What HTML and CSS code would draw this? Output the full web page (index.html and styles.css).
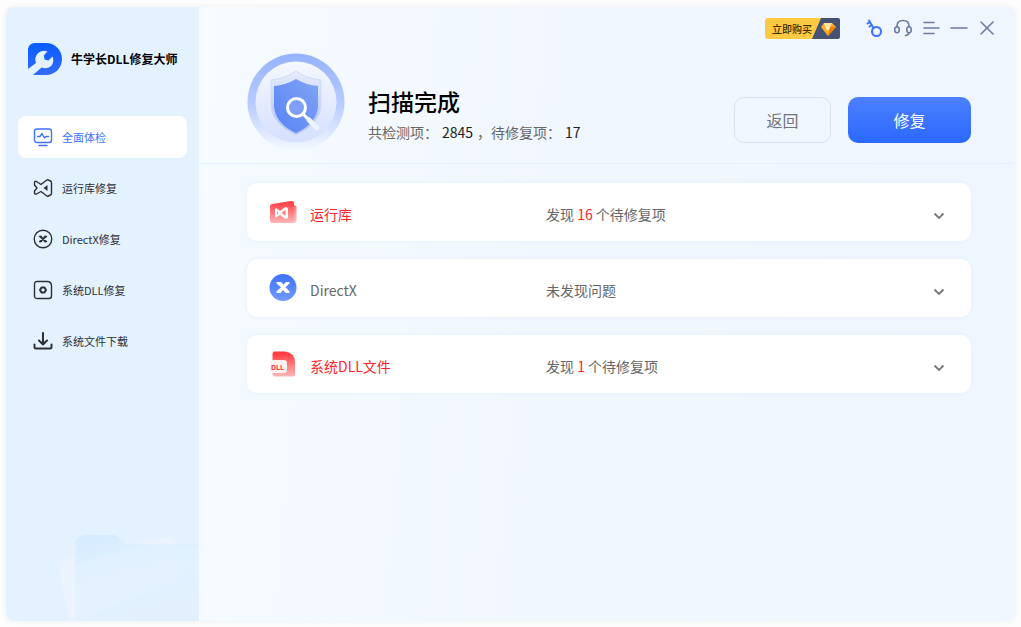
FILE: index.html
```html
<!DOCTYPE html>
<html lang="zh-CN">
<head>
<meta charset="utf-8">
<title>牛学长DLL修复大师</title>
<link rel="stylesheet" href="styles.css">
</head>
<body>
<div class="window">
  <aside class="sidebar">
    <div class="brand">
      <svg class="brand-logo" viewBox="0 0 34 32" aria-hidden="true">
        <defs><linearGradient id="logoFill" x1="0" y1="0" x2="0" y2="1"><stop offset="0" stop-color="#0a5cff"/><stop offset="1" stop-color="#316cff"/></linearGradient></defs>
        <path fill="url(#logoFill)" d="M7 0H18C27 0 34 7 34 16S27 32 18 32H5L13.500 24.500C17 26 21 25.400 23.500 22.500C25.500 20 25.800 16.500 24.500 13.500L20.500 17.500L16.500 16.500L15.800 12.500L19.500 8.300C16 7 12 8 9.500 10.800C7 13.600 6.800 17 8 20L0 26V7C0 3 3 0 7 0Z"/>
      </svg>
      <span>牛学长DLL修复大师</span>
    </div>
    <nav class="nav">
      <a class="nav-item active" href="#" aria-current="page">
        <svg viewBox="0 0 20 20"><rect x="1.500" y="2" width="17" height="13.500" rx="2.500"/><path d="M4.500 9.500H7L9 6.500L11.500 11L13 9.500H15.500M6 18.500H14"/></svg>
        <span>全面体检</span>
      </a>
      <a class="nav-item" href="#">
        <svg viewBox="0 0 20 20"><path d="M1.500 4.500Q1.500 3 3.500 3.500L8 6.500L13.500 2.300Q14.300 1.500 15.300 2L17.500 3Q18.500 3.500 18.500 4.500V15.500Q18.500 16.500 17.500 17L15.300 18Q14.300 18.500 13.500 17.700L8 13.500L3.500 16Q1.500 16.500 1.500 15V13L4 10L1.500 7Z"/><path class="solid" d="M14.500 7V13L10.500 10Z"/></svg>
        <span>运行库修复</span>
      </a>
      <a class="nav-item" href="#">
        <svg viewBox="0 0 20 20"><circle cx="10" cy="10" r="8.800"/><path class="heavy" d="M7.500 7.800L12.500 12.200M12.500 7.800L7.500 12.200"/><path d="M6.500 7.500H8.500M11.500 7.500H13.500M6.500 12.500H8.500M11.500 12.500H13.500"/></svg>
        <span>DirectX修复</span>
      </a>
      <a class="nav-item" href="#">
        <svg viewBox="0 0 20 20"><path d="M4 1.500H14Q18.500 1.500 18.500 6V16Q18.500 18.500 16 18.500H4Q1.500 18.500 1.500 16V4Q1.500 1.500 4 1.500Z"/><path class="heavy" d="M8.500 7.500H11.500L13 10L11.500 12.500H8.500L7 10Z"/></svg>
        <span>系统DLL修复</span>
      </a>
      <a class="nav-item" href="#">
        <svg viewBox="0 0 20 20"><path class="heavy" d="M10 2V13M6 9.500L10 13.500L14 9.500M1.500 13.500V16Q1.500 17.500 3 17.500H17Q18.500 17.500 18.500 16V13.500"/></svg>
        <span>系统文件下载</span>
      </a>
    </nav>
    <svg class="folder" viewBox="0 0 141 87" aria-hidden="true">
      <defs><linearGradient id="folderFill" x1="0" y1="0" x2=".35" y2="1"><stop offset="0" stop-color="#d4ebff"/><stop offset=".55" stop-color="#e2f2ff"/><stop offset="1" stop-color="#e2f0fe"/></linearGradient></defs>
      <path fill="#ebf3ff" d="M1 33Q0 28 5 26L108 3Q115 2 118 8L141 87H11Z"/>
      <path fill="url(#folderFill)" d="M17 87V12Q17 1 30 1H57L67 10H141V87Z"/>
      <path fill="#ebf3ff" opacity=".8" d="M83 10L108 4Q115 3 118 10Z"/>
      <path fill="#eef6ff" opacity=".2" d="M17 31L83 10H118L124 44L20 87H17Z"/>
    </svg>
  </aside>

  <main class="main">
    <header class="header">
      <div class="toolbar">
        <button class="buy" type="button"><span>立即购买</span>
          <svg viewBox="0 0 28 21" aria-hidden="true"><path fill="#465273" d="M9 0H26Q28 0 28 2V19Q28 21 26 21H0Z"/><path fill="#ffad24" d="M12 5H20L24 9L16 18L9 9Z"/><path fill="#ffe3a0" d="M12 5H20L18 9H13Z"/><path fill="#ed8100" d="M18 9H24L16 18Z"/><path fill="#fff1cc" d="M13 9H18L16 13Z"/></svg>
        </button>
        <button class="tool key" type="button" aria-label="注册"><svg viewBox="0 0 20 20"><circle cx="11.500" cy="13.500" r="4.500"/><path d="M8.500 10L4 2.500M2.500 5.500L5 4M4.500 8.500L7 7"/></svg></button>
        <button class="tool" type="button" aria-label="客服"><svg viewBox="0 0 20 20"><path d="M4 9V8Q4 2.500 10 2.500T16 8V9M16 15Q15.500 17 12.500 17.500"/><ellipse cx="4" cy="11.700" rx="2.300" ry="3"/><ellipse cx="16" cy="11.700" rx="2.300" ry="3"/></svg></button>
        <button class="tool" type="button" aria-label="菜单"><svg viewBox="0 0 20 20"><path d="M3 4.500H13M3 10H18M3 15.500H13"/></svg></button>
        <button class="tool" type="button" aria-label="最小化"><svg viewBox="0 0 20 20"><path d="M2 10H18"/></svg></button>
        <button class="tool" type="button" aria-label="关闭"><svg viewBox="0 0 20 20"><path d="M4 4L16 16M16 4L4 16"/></svg></button>
      </div>
      <div class="summary">
        <svg class="medal" viewBox="0 0 98 98" aria-hidden="true">
          <defs>
            <linearGradient id="ring" x1="0" y1="0" x2="0" y2="1"><stop offset="0" stop-color="#95b3ff"/><stop offset=".5" stop-color="#b5caff"/><stop offset="1" stop-color="#f4f9ff"/></linearGradient>
            <linearGradient id="disc" x1="0" y1="0" x2="0" y2="1"><stop offset="0" stop-color="#f5f8ff"/><stop offset="1" stop-color="#d5e0ff"/></linearGradient>
            <linearGradient id="shield" x1="1" y1="0" x2="0" y2="1"><stop offset="0" stop-color="#82a4f4"/><stop offset="1" stop-color="#5683f6"/></linearGradient>
            <linearGradient id="back" x1="0" y1="0" x2="0" y2="1"><stop offset="0" stop-color="#e6ecfb"/><stop offset="1" stop-color="#a7bff8"/></linearGradient>
          </defs>
          <circle cx="49" cy="49" r="48.500" fill="url(#ring)"/>
          <circle cx="49" cy="49" r="40.500" fill="url(#disc)"/>
          <path fill="url(#back)" stroke="#d1dbf5" d="M49 18Q60 26 74 27V53Q73 71 49 82Q25 71 24 53V27Q38 26 49 18Z"/>
          <path fill="url(#shield)" d="M49 26Q59 32 71 33V53Q70 70 49 80Q28 70 27 53V33Q39 32 49 26Z"/>
          <circle cx="49.500" cy="54.500" r="9" fill="#7e9ff5" stroke="#fff" stroke-width="3"/>
          <path stroke="#fff" stroke-width="3" stroke-linecap="round" d="M56 61L62 67"/>
          <path stroke="#edf3ff" stroke-width="5" stroke-linecap="round" d="M62 67L70 75"/>
        </svg>
        <div class="result">
          <h1>扫描完成</h1>
          <p><span>共检测项：</span><b>2845</b><span>，待修复项：</span><b>17</b></p>
        </div>
        <div class="actions">
          <button class="btn back" type="button">返回</button>
          <button class="btn repair" type="button">修复</button>
        </div>
      </div>
    </header>

    <section class="cards">
      <article class="card problem">
        <svg class="card-icon" viewBox="0 0 28 28" aria-hidden="true">
          <defs><linearGradient id="redA" x1="0" y1="0" x2="0" y2="1"><stop offset="0" stop-color="#ff383d"/><stop offset="1" stop-color="#ffb8b8"/></linearGradient></defs>
          <path fill="url(#redA)" opacity=".75" d="M20 6L25 7Q27.500 7.500 27.500 9V23Q27.500 25 25 25H20Z"/>
          <path fill="url(#redA)" d="M3 6L22 3Q25 2.500 25 5V22Q25 25 22 25H3Q1 25 1 23V8Q1 6.500 3 6Z"/>
          <path fill="#fff" fill-rule="evenodd" d="M7 10L11 13L16.500 9L19 10V20L16.500 21L11 17L7 19.500L6 18.500V11ZM8 13V17L9.500 15ZM16.500 12L12.500 15L16.500 18Z"/>
        </svg>
        <h2>运行库</h2><p>发现 <b>16</b> 个待修复项</p>
        <button class="expand" type="button" aria-label="展开运行库"><svg viewBox="0 0 12 8"><path d="M1.500 1.500L6 6L10.500 1.500"/></svg></button>
      </article>
      <article class="card">
        <svg class="card-icon" viewBox="0 0 28 28" aria-hidden="true">
          <defs><linearGradient id="blueA" x1="0" y1="0" x2="0" y2="1"><stop offset="0" stop-color="#3e72ff"/><stop offset="1" stop-color="#7299ff"/></linearGradient></defs>
          <circle cx="14" cy="13.500" r="13.500" fill="url(#blueA)"/>
          <path fill="#fff" d="M7.500 8H12L14.500 10.500L17 8H20.500V9.500L16.500 13.200L20.500 17.500V19H16.500L14 16L11.500 19H7.500V17.500L12 13.200L7.500 9.500Z"/>
        </svg>
        <h2>DirectX</h2><p>未发现问题</p>
        <button class="expand" type="button" aria-label="展开DirectX"><svg viewBox="0 0 12 8"><path d="M1.500 1.500L6 6L10.500 1.500"/></svg></button>
      </article>
      <article class="card problem">
        <svg class="card-icon" viewBox="0 0 28 28" aria-hidden="true">
          <defs><linearGradient id="redB" x1="0" y1="0" x2="0" y2="1"><stop offset="0" stop-color="#ff3338"/><stop offset="1" stop-color="#ffb8b8"/></linearGradient></defs>
          <path fill="url(#redB)" d="M6 1.500H16Q26 3 26 12V24Q26 26.500 23.500 26.500H6Q3.500 26.500 3.500 24V4Q3.500 1.500 6 1.500Z"/>
          <rect x="1" y="10" width="17" height="13" rx="3" fill="#fff0f0"/>
          <text class="dll" x="2" y="20">DLL</text>
        </svg>
        <h2>系统DLL文件</h2><p>发现 <b>1</b> 个待修复项</p>
        <button class="expand" type="button" aria-label="展开系统DLL文件"><svg viewBox="0 0 12 8"><path d="M1.500 1.500L6 6L10.500 1.500"/></svg></button>
      </article>
    </section>
  </main>
</div>
</body>
</html>
```

FILE: styles.css
```css
* { box-sizing: border-box; }
body {
  margin: 0;
  padding: 7px 6px 6px;
  min-height: 100vh;
  display: flex;
  background: #fdfdfd;
  color: #333;
  font-family: "Noto Sans CJK SC", "Noto Sans", sans-serif;
}
h1, h2, p { margin: 0; font-weight: 400; }
b { font-weight: 400; }
button { font-family: inherit; margin: 0; padding: 0; border: 0; background: none; cursor: pointer; }
svg { display: block; flex: none; }

.window {
  flex: 1;
  display: flex;
  border-radius: 8px;
  overflow: hidden;
  box-shadow: 0 0 6px rgba(0, 0, 0, .07);
}

.sidebar {
  width: 193px;
  flex: none;
  display: flex;
  flex-direction: column;
  background: #e4f1ff;
}
.brand {
  display: flex;
  align-items: center;
  gap: 9px;
  padding: 36px 0 0 22px;
  color: #000;
  font-size: 12px;
  font-weight: 700;
  line-height: 32px;
  white-space: nowrap;
}
.brand-logo { width: 34px; height: 32px; }
.nav {
  display: flex;
  flex-direction: column;
  gap: 9px;
  padding: 41px 12px 0;
}
.nav-item {
  display: flex;
  align-items: center;
  gap: 9px;
  height: 42px;
  padding-left: 15px;
  border-radius: 8px;
  color: #2b3036;
  font-size: 11px;
  text-decoration: none;
}
.nav-item.active { background: #fff; color: #3d72ff; }
.nav-item svg {
  width: 20px;
  height: 20px;
  fill: none;
  stroke: currentColor;
  stroke-width: 1.4;
  stroke-linecap: round;
  stroke-linejoin: round;
}
.nav-item .heavy { stroke-width: 2; }
.nav-item .solid { fill: currentColor; stroke: none; }
.folder { width: 141px; height: 87px; margin: auto 0 0 auto; }

.main {
  flex: 1;
  min-width: 0;
  background: linear-gradient(95deg, #f5fbff 0%, #f2f7ff 40%, #eff6ff 100%);
}
.header { border-bottom: 1px solid #e4f1ff; padding: 0 44px 12px 48px; }
.toolbar {
  display: flex;
  justify-content: flex-end;
  align-items: center;
  gap: 8px;
  height: 42px;
  margin-right: -26px;
}
.buy {
  display: flex;
  align-items: center;
  height: 21px;
  margin-right: 17px;
  padding-left: 7px;
  border-radius: 3px;
  background: #ffc941;
  color: #3a2a00;
  font-size: 10px;
  font-weight: 500;
}
.buy svg { width: 28px; height: 21px; }
.tool { color: #6d7ba3; }
.tool svg {
  width: 20px;
  height: 20px;
  fill: none;
  stroke: currentColor;
  stroke-width: 1.6;
  stroke-linecap: round;
}
.tool.key { color: #3b71ff; }
.tool.key svg { stroke-width: 2; }

.summary { display: flex; align-items: flex-start; }
.medal { width: 98px; height: 98px; margin-top: 4px; }
.result { flex: 1; padding: 35px 16px 0 23px; }
.result h1 { color: #000; font-size: 23px; font-weight: 500; line-height: 34px; }
.result p {
  display: flex;
  align-items: center;
  color: #666;
  font-size: 14px;
  line-height: 28px;
  white-space: nowrap;
}
.result b { color: #222; margin: 0 4px; }
.actions { display: flex; gap: 17px; padding-top: 48px; }
.btn {
  height: 46px;
  border-radius: 10px;
  font-size: 16px;
}
.btn.back { width: 97px; border: 1px solid #dbe0ec; color: #707377; }
.btn.repair { width: 123px; background: linear-gradient(#4c80ff, #2a68ff); color: #fff; }

.cards {
  display: flex;
  flex-direction: column;
  gap: 18px;
  padding: 19px 44px 24px 48px;
}
.card {
  display: flex;
  align-items: center;
  height: 58px;
  padding: 0 24px 0 22px;
  border-radius: 10px;
  background: #fff;
  box-shadow: 0 0 4px #e3eeff;
  color: #666;
}
.card-icon { width: 28px; height: 28px; }
.card h2 { flex: 0 0 236px; margin-left: 13px; }
.card p { flex: 1; }
.card h2, .card p { font-size: 14px; line-height: 20px; padding-top: 4px; }
.problem h2, .problem b { color: #ff2429; }
.expand { width: 16px; height: 16px; margin-top: 8px; display: grid; place-items: center; }
.expand svg { width: 12px; height: 8px; fill: none; stroke: #777; stroke-width: 1.8; }
.dll { fill: #ff3a3f; font: 700 7px "Noto Sans", sans-serif; }
```
